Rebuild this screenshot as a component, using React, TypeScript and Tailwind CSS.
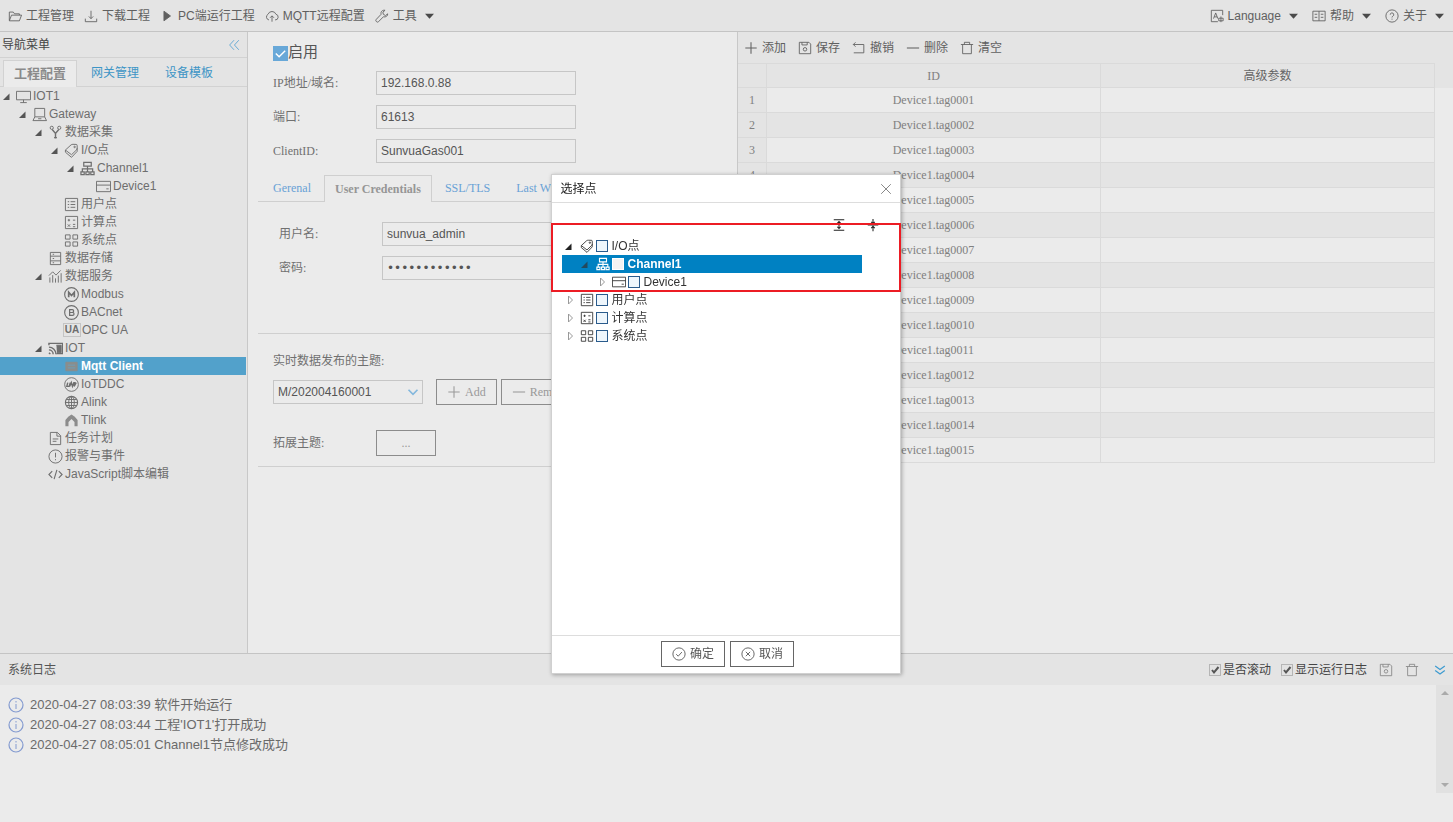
import { useState } from "react";
import type { ReactNode } from "react";

const SANS = "font-['Liberation_Sans','Noto_Sans_CJK_SC',sans-serif]";
const SERIF = "font-['Liberation_Serif','Noto_Sans_CJK_SC',serif]";

const indent = ["pl-0", "pl-4", "pl-8", "pl-12", "pl-16", "pl-20"];

const icons: Record<string, ReactNode> = {
  folder: <><path d="M1.500 13V3.500h4.500l1.500 2h5.500V7" /><path d="M1.500 13.500 4 7h11.500l-2.500 6.500z" /></>,
  download: <><path d="M1.500 11v3.500h13V11" /><path d="M8 2v9M5.500 8.500 8 11l2.500-2.500" /></>,
  play: <path d="M4.500 2.500v11L12 8z" fill="currentColor" />,
  cloud: <><path d="M4.500 12.500A3.500 3.500 0 0 1 3.500 6 4.800 4.800 0 0 1 12.500 6a3.300 3.300 0 0 1-1 6.500" /><path d="M8 14.500V8M5.800 10 8 7.800l2.200 2.200" /></>,
  wrench: <path d="M14.500 5.500 12 7.500 9.500 6 9 3.500l2.500-2C8.500.8 6.200 3 7 6L1.500 11.800a1.700 1.700 0 0 0 2.700 2.500L9.500 9c3 .6 5.300-1.200 5-3.500z" />,
  lang: <><path d="M14.500 7V1.500h-13v13H9" /><path d="M4 11 6.500 4.500 9 11M5 9h3M10 10.500h5v3h-5zM12.500 8.500v6.500" /></>,
  book: <><path d="M8 2.500v11M8 2.500H1v11h7M8 2.500h7v11H8" /><path d="M3 6h3M3 9.500h3M10 6h3M10 9.500h3" /></>,
  help: <><circle cx="8" cy="8" r="7" /><path d="M6 6.500a2 2 0 1 1 3 1.700c-.7.400-1 .7-1 1.500M8 11v1.200" /></>,
  monitor: <path d="M.5 2.500h15v9H.5zM8 11.500v3M4.500 14.500h7" />,
  laptop: <path d="M3 1.500h10.500v9H3zM3 10.500l-2 4h14.500l-2-4M6.500 12.500h3.500" />,
  fork: <><circle cx="4" cy="3" r="1.700" /><circle cx="12" cy="3" r="1.700" /><path d="M4.500 4.800 8 9l3.500-4.200M8 9v5.500M6.500 13.500h3" strokeWidth="1.500" /></>,
  tag: <><path d="M1.500 7.500 7.500 2q.8-.6 2-.6l3.500.1q1 0 1 1l.1 3q0 1-.7 1.800L8 12.500z" /><path d="M1.500 7.500v2.300L8 15.300l6-6.300V5.500" /><circle cx="11.300" cy="4.200" r=".8" /></>,
  channel: <path d="M4 1.500h8v4H4zM8 5.500v3M2.500 11V8.500h11V11M8 8.500V11M1 11.500h3.500v3H1zM6.300 11.500h3.500v3H6.300zM11.500 11.500H15v3h-3.500z" strokeWidth="1.300" />,
  device: <path d="M.5 2.500h15v11H.5zM.5 6.500h15M11 10.500h2.500" />,
  user: <><path d="M1.500 1.500h13v13h-13z" /><path d="M4 5h1.500M7 5h5M4 8h1.500M7 8h5M4 11h1.500M7 11h5" /></>,
  calc: <><path d="M1.500 1.500h13v13h-13z" /><path d="M4 5.500h2.500M5.200 4.200v2.600M9.500 5.500H12M4 10l2.500 2.500M6.500 10 4 12.500M9.500 10H12M9.500 12.500H12" /></>,
  grid: <path d="M1.500 2h5v4.500h-5zM9.500 2h5v4.500h-5zM1.500 9.500h5V14h-5zM9.500 9.500h5V14h-5z" />,
  store: <path d="M2.500 1.500h11v13h-11zM2.500 5.500h11M2.500 10.500h11M5 3.500h1.500M5 8h1.500M5 12.500h1.500" />,
  chart: <path d="M2 14.500V9M5 14.500V6.500M8 14.500V10M11 14.500V7M14 14.500V4.500M1 7l4-4 3.500 3.500 5-5" />,
  modbus: <><circle cx="8" cy="8" r="7.300" strokeWidth="1.200" /><path d="M5 11V5.500l3 3.500 3-3.500V11" strokeWidth="1.800" /></>,
  bacnet: <><circle cx="8" cy="8" r="7.300" strokeWidth="1.200" /><path d="M6 5h2.800a1.400 1.400 0 0 1 0 3H6zM6 8h3.200a1.500 1.500 0 0 1 0 3H6z" strokeWidth="1.300" /></>,
  cast: <><path d="M1 4.500v-2h14.500v11H9" strokeWidth="1.500" /><path d="M9 4.500h5v8H9.500" fill="currentColor" /><path d="M1 12.500 2.500 14M1 9.500A4.500 4.500 0 0 1 5.500 14M1 6.500A7.500 7.500 0 0 1 8.500 14" strokeWidth="1.500" /></>,
  mqtt: <g fill="#8b8d8c" stroke="#8b8d8c"><path d="M2 3.500h12v9H2z" /><path d="M4 6.500h8M4 9.500h8" stroke="#6f9fb9" /></g>,
  ddc: <><circle cx="8" cy="8" r="7.300" /><path d="M4 6 3 10h2.500l1.200-4M6 10l1.800-4L9 10l1.500-4h1L10.800 10l2.200-4" strokeWidth="1.500" /></>,
  globe: <><circle cx="8" cy="8" r="6.500" strokeWidth="1.200" /><ellipse cx="8" cy="8" rx="3" ry="6.500" /><path d="M1.500 8h13M2.500 4.800h11M2.500 11.200h11M8 1.500v13" /></>,
  tlink: <path d="M1.500 14V7.500L4.500 4 8 1.500 11.500 4l3 3.500V14h-3.300V9.500L8 6.500 4.800 9.500V14z" fill="#8c8c8c" stroke="none" />,
  doc: <path d="M2.500 1.500h7.500l3.500 3.500v9.500h-11zM9.500 1.500V5.500h4M5 8.500h6M5 11h4" />,
  alert: <><circle cx="8" cy="8" r="7" /><path d="M8 4v5M8 10.800V12" /></>,
  code: <path d="M4.500 4.500 1 8l3.500 3.500M11.500 4.500 15 8l-3.500 3.500M9.500 3l-3 10" strokeWidth="1.200" />,
  plus: <path d="M8 1.500v13M1.500 8h13" strokeWidth="1.200" />,
  minus: <path d="M1 8h14" strokeWidth="1.200" />,
  save: <><path d="M1.500 1.500h11l2 2v11h-13zM4.500 1.500v3h6v-3" /><circle cx="8" cy="9.500" r="2" /></>,
  undo: <path d="M4 1.500 1.500 4 4 6.500M1.500 4h12v9.500H2" />,
  trash: <path d="M1 4h14M5 4V1.500h6V4M3 4v10.500h10V4" />,
  ok: <><circle cx="8" cy="8" r="7" /><path d="m4.800 8.200 2.300 2.300 4.200-4.700" /></>,
  cancel: <><circle cx="8" cy="8" r="7" /><path d="m5.500 5.500 5 5M10.500 5.500l-5 5" /></>,
  info: <><circle cx="8" cy="8" r="7" strokeWidth="1.200" /><path d="M8 4v1.500M8 7v5" /></>,
  close: <path d="m2.500 2.500 11 11M13.500 2.500l-11 11" />,
  left: <path d="M8 2.500 3 8l5 5.500M13.500 2.500l-5 5.500 5 5.500" />,
  down: <path d="m2.500 3.500 5.500 4 5.500-4M2.500 8.500l5.500 4 5.500-4" strokeWidth="1.400" />,
  chevron: <path d="m2 5 6 6 6-6" strokeWidth="2.200" />,
  expand: <path d="M2 2h12M2 14h12M8 4.500v7M6 6l2-2 2 2M6 10l2 2 2-2" strokeWidth="1.200" />,
  collapse: <path d="M2 8h12M8 1v5M8 10v5M6 4.500l2 2 2-2M6 11.500l2-2 2 2" strokeWidth="1.200" />,
};

function Icon({ name, className = "size-3.5" }: { name: string; className?: string }) {
  if (name === "opcua") {
    return <span className="w-4 shrink-0 text-center text-[10px] leading-3 font-bold outline outline-[#c4c4c4]">UA</span>;
  }
  return (
    <svg viewBox="0 0 16 16" className={`shrink-0 ${className}`} fill="none" stroke="currentColor" strokeWidth="1" aria-hidden="true">
      {icons[name]}
    </svg>
  );
}

function Caret() {
  return <svg viewBox="0 0 10 6" className="ml-1 h-1.5 w-[9px] shrink-0" fill="#4a4a4a" aria-hidden="true"><path d="M0 .5h10L5 6z" /></svg>;
}

function Arrow({ state, color = "#555" }: { state?: "open" | "closed"; color?: string }) {
  return (
    <svg viewBox="0 0 16 16" className="size-4 shrink-0" aria-hidden="true">
      {state === "open" && <path d="M3 12h6.500V5.500z" fill={color} />}
      {state === "closed" && <path d="M6.500 4v8l4-4z" fill="none" stroke="#999" />}
    </svg>
  );
}

function BarButton({ icon, label, menu }: { icon: string; label: string; menu?: boolean }) {
  return (
    <button type="button" className="flex items-center gap-1 whitespace-nowrap text-[#606060]">
      <Icon name={icon} />
      {label}
      {menu && <Caret />}
    </button>
  );
}

type Node = { level: number; icon: string; label: string; state?: "open" | "closed"; selected?: boolean };

const navTree: Node[] = [
  { level: 0, icon: "monitor", label: "IOT1", state: "open" },
  { level: 1, icon: "laptop", label: "Gateway", state: "open" },
  { level: 2, icon: "fork", label: "数据采集", state: "open" },
  { level: 3, icon: "tag", label: "I/O点", state: "open" },
  { level: 4, icon: "channel", label: "Channel1", state: "open" },
  { level: 5, icon: "device", label: "Device1" },
  { level: 3, icon: "user", label: "用户点" },
  { level: 3, icon: "calc", label: "计算点" },
  { level: 3, icon: "grid", label: "系统点" },
  { level: 2, icon: "store", label: "数据存储" },
  { level: 2, icon: "chart", label: "数据服务", state: "open" },
  { level: 3, icon: "modbus", label: "Modbus" },
  { level: 3, icon: "bacnet", label: "BACnet" },
  { level: 3, icon: "opcua", label: "OPC UA" },
  { level: 2, icon: "cast", label: "IOT", state: "open" },
  { level: 3, icon: "mqtt", label: "Mqtt Client", selected: true },
  { level: 3, icon: "ddc", label: "IoTDDC" },
  { level: 3, icon: "globe", label: "Alink" },
  { level: 3, icon: "tlink", label: "Tlink" },
  { level: 2, icon: "doc", label: "任务计划" },
  { level: 2, icon: "alert", label: "报警与事件" },
  { level: 2, icon: "code", label: "JavaScript脚本编辑" },
];

const pointTree: Node[] = [
  { level: 0, icon: "tag", label: "I/O点", state: "open" },
  { level: 1, icon: "channel", label: "Channel1", state: "open", selected: true },
  { level: 2, icon: "device", label: "Device1", state: "closed" },
  { level: 0, icon: "user", label: "用户点", state: "closed" },
  { level: 0, icon: "calc", label: "计算点", state: "closed" },
  { level: 0, icon: "grid", label: "系统点", state: "closed" },
];

const tags = Array.from({ length: 15 }, (_, i) => `Device1.tag${String(i + 1).padStart(4, "0")}`);

const logs = [
  "2020-04-27 08:03:39 软件开始运行",
  "2020-04-27 08:03:44 工程'IOT1'打开成功",
  "2020-04-27 08:05:01 Channel1节点修改成功",
];

function Sidebar() {
  return (
    <aside className="w-[248px] shrink-0 border-r border-[#c8c8c8] bg-[#e4e4e4]">
      <div className="flex h-[26px] items-center justify-between border-b border-[#d2d2d2] pr-1.5 pl-0.5">
        <span className="text-[#444]">导航菜单</span>
        <button type="button" aria-label="收起" className="text-[#5aa5d2]"><Icon name="left" /></button>
      </div>
      <nav className="flex h-[29px] items-end border-b border-[#d2d2d2] pl-[3px] text-[13px]">
        <button type="button" className="-mb-px h-[27px] border border-b-0 border-[#d2d2d2] bg-[#ebebeb] px-2.5 font-bold text-[#8a8a8a]">工程配置</button>
        <button type="button" className="h-[27px] px-3.5 text-xs text-[#3d95c6]">网关管理</button>
        <button type="button" className="h-[27px] px-3 text-xs text-[#3d95c6]">设备模板</button>
      </nav>
      <ul className="mr-px">
        {navTree.map((n) => (
          <li
            key={n.label}
            className={`flex h-[18px] items-center whitespace-nowrap ${indent[n.level]} ${n.selected ? "bg-[#52a1cb] font-bold text-white" : "text-[#6e6e6e]"}`}
          >
            <Arrow state={n.state} />
            <Icon name={n.icon} className="size-[15px]" />
            <span className="ml-0.5">{n.label}</span>
          </li>
        ))}
      </ul>
    </aside>
  );
}

function Field({ id, label, value, type = "text" }: { id: string; label: string; value: string; type?: string }) {
  const font = type === "password" ? "font-['DejaVu_Sans',sans-serif]" : SANS;
  return (
    <div className="flex items-center">
      <label htmlFor={id} className="w-[103px] shrink-0">{label}</label>
      <input
        id={id}
        type={type}
        defaultValue={value}
        className={`h-6 w-[200px] border border-[#c6c6c6] bg-transparent px-1 text-[#555] outline-none ${font}`}
      />
    </div>
  );
}

function MqttForm() {
  return (
    <section className={`w-[490px] shrink-0 border-r border-[#c8c8c8] pt-[11px] pl-2.5 text-[#707070] ${SERIF}`}>
      <div className="space-y-2.5 pl-[15px]">
        <label className="mb-2 flex h-5 items-center text-[15px] text-[#555]">
          <span className="relative flex">
            <input type="checkbox" defaultChecked className="size-[15px] appearance-none bg-[#68a8d8]" />
            <svg viewBox="0 0 16 16" className="pointer-events-none absolute inset-0" fill="none" stroke="#fff" strokeWidth="1.500" aria-hidden="true"><path d="m3 8 3.500 3.500L13 5" /></svg>
          </span>
          启用
        </label>
        <Field id="host" label="IP地址/域名:" value="192.168.0.88" />
        <Field id="port" label="端口:" value="61613" />
        <Field id="client" label="ClientID:" value="SunvuaGas001" />
      </div>

      <nav className="mt-3 flex h-[27px] border-b border-[#cfcfcf] pl-0.5 text-[#69a2d6]">
        <button type="button" className="px-[13px]">Gerenal</button>
        <button type="button" className="-mb-px border border-b-0 border-[#cfcfcf] bg-[#ebebeb] px-2.5 font-bold text-[#969696]">User Credentials</button>
        <button type="button" className="px-[13px]">SSL/TLS</button>
        <button type="button" className="px-[13px]">Last W</button>
      </nav>
      <div className="h-[132px] space-y-2.5 border-b border-[#cfcfcf] pt-5 pl-[21px]">
        <Field id="user" label="用户名:" value="sunvua_admin" />
        <Field id="pass" label="密码:" value="############" type="password" />
      </div>

      <div className="border-b border-[#cfcfcf] pt-[18px] pb-2.5 pl-[15px]">
        <label htmlFor="topic" className="block h-[27px] leading-[18px]">实时数据发布的主题:</label>
        <div className="flex items-center gap-1">
          <div className="relative mr-[9px]">
            <select id="topic" className={`h-6 w-[150px] appearance-none border border-[#c6c6c6] bg-transparent px-1 text-[#555] ${SANS}`}>
              <option>M/202004160001</option>
            </select>
            <Icon name="chevron" className="pointer-events-none absolute top-1.5 right-1 size-3 text-[#84b8dd]" />
          </div>
          <button type="button" className="flex h-[26px] items-center gap-1 border border-[#8c8c8c] px-2.5 text-[#999]"><Icon name="plus" />Add</button>
          <button type="button" className="flex h-[26px] items-center gap-1 border border-[#8c8c8c] px-2.5 text-[#999]"><Icon name="minus" />Remove</button>
        </div>
        <div className="mt-[25px] flex items-center">
          <span className="w-[103px]">拓展主题:</span>
          <button type="button" className="h-[26px] w-[60px] border border-[#8c8c8c] text-[#999]">...</button>
        </div>
      </div>
    </section>
  );
}

function TagGrid() {
  return (
    <section className="min-w-0 flex-1">
      <div className="flex h-[31px] items-center gap-3 bg-[#e4e4e4] pl-1.5">
        <BarButton icon="plus" label="添加" />
        <BarButton icon="save" label="保存" />
        <BarButton icon="undo" label="撤销" />
        <BarButton icon="minus" label="删除" />
        <BarButton icon="trash" label="清空" />
      </div>
      <div className="bg-[linear-gradient(#e4e4e4_25px,transparent_25px)]">
        <div className="pr-[18px]">
          <table className={`w-full table-fixed border-separate border-spacing-0 text-center text-[#808080] ${SERIF}`}>
            <thead>
              <tr className="h-[25px] [&>th]:border-y [&>th]:border-r [&>th]:border-[#dadada] [&>th]:p-0 [&>th]:font-normal">
                <th className="w-[29px]" />
                <th>ID</th>
                <th className="text-[#666]">高级参数</th>
              </tr>
            </thead>
            <tbody>
              {tags.map((t, i) => (
                <tr key={t} className="h-[25px] even:bg-[#e4e4e4] [&>td]:border-r [&>td]:border-b [&>td]:border-[#dadada] [&>td]:p-0">
                  <td className="bg-[#e4e4e4]">{i + 1}</td>
                  <td>{t}</td>
                  <td />
                </tr>
              ))}
            </tbody>
          </table>
        </div>
      </div>
    </section>
  );
}

function LogCheck({ label }: { label: string }) {
  return (
    <label className="flex items-center gap-0.5 text-[#444]">
      <span className="relative flex">
        <input type="checkbox" defaultChecked className="size-3 appearance-none border border-[#b5b5b5] bg-[#e2e2e2]" />
        <svg viewBox="0 0 12 12" className="pointer-events-none absolute inset-0" fill="none" stroke="#555" strokeWidth="2" aria-hidden="true"><path d="m3 6 2 2.500L9.500 3" /></svg>
      </span>
      {label}
    </label>
  );
}

function LogPanel() {
  return (
    <section className="h-[169px] shrink-0 border-t border-[#c4c4c4]">
      <header className="flex h-[31px] items-center bg-[#e4e4e4] pr-1.5 pl-2 text-[#555]">
        <h2 className="mr-auto">系统日志</h2>
        <div className="flex items-center gap-2.5">
          <LogCheck label="是否滚动" />
          <LogCheck label="显示运行日志" />
        </div>
        <div className="ml-3 flex items-center gap-3 text-[#888]">
          <button type="button" aria-label="保存日志"><Icon name="save" /></button>
          <button type="button" aria-label="清空日志"><Icon name="trash" /></button>
          <button type="button" aria-label="收起日志" className="ml-0.5 text-[#3d9bd0]"><Icon name="down" /></button>
        </div>
      </header>
      <div className="flex h-[108px]">
        <ul className="flex-1 pt-2.5 pl-2 text-[13px] text-[#6a6a6a]">
          {logs.map((l) => (
            <li key={l} className="flex h-5 items-center gap-1.5">
              <Icon name="info" className="size-4 text-[#849bd0]" />
              {l}
            </li>
          ))}
        </ul>
        <div className="flex w-[17px] flex-col items-center justify-between bg-[#e1e1e1] py-1.5">
          <svg viewBox="0 0 8 4" className="h-1 w-2" fill="#aaa" aria-hidden="true"><path d="M0 4h8L4 0z" /></svg>
          <svg viewBox="0 0 8 4" className="h-1 w-2" fill="#aaa" aria-hidden="true"><path d="M0 0h8L4 4z" /></svg>
        </div>
      </div>
    </section>
  );
}

function PointDialog({ onClose }: { onClose: () => void }) {
  return (
    <div className="fixed inset-0 flex items-center justify-center pt-[26px] pr-0.5">
      <div role="dialog" aria-labelledby="dlg-title" className="relative flex h-[500px] w-[350px] flex-col border border-[#d0d0d0] bg-white shadow-[1px_1px_4px_rgba(0,0,0,0.300)]">
        <header className="flex h-7 items-center justify-between border-b border-[#ddd] pr-[7px] pl-[9px]">
          <h2 id="dlg-title" className="text-[#222]">选择点</h2>
          <button type="button" aria-label="关闭" onClick={onClose} className="text-[#777]"><Icon name="close" /></button>
        </header>
        <div className="flex-1 pl-2.5">
          <div className="flex h-[34px] items-end justify-end gap-5 pr-5 pb-[5px] text-[#222]">
            <button type="button" aria-label="展开"><Icon name="expand" /></button>
            <button type="button" aria-label="折叠"><Icon name="collapse" /></button>
          </div>
          <ul className="w-[300px]">
            {pointTree.map((n) => (
              <li key={n.label} className={`h-[18px] ${n.selected ? "bg-[#0081c2] font-bold text-white" : "text-[#333]"}`}>
                <label className={`flex h-full items-center ${indent[n.level]}`}>
                  <Arrow state={n.state} color={n.selected ? "#234a5e" : "#222"} />
                  <span className="flex w-[18px] pl-0.5"><Icon name={n.icon} /></span>
                  <input type="checkbox" className={`mr-1 size-3 appearance-none border ${n.selected ? "border-white bg-[#f3f3f3]" : "border-[#2a5b8c] bg-[#eef6fc] checked:bg-[#2a5b8c]"}`} />
                  {n.label}
                </label>
              </li>
            ))}
          </ul>
        </div>
        <footer className="flex h-[38px] items-start justify-center gap-[5px] border-t border-[#ddd] pt-[5px] pl-1 text-[#555]">
          <button type="button" onClick={onClose} className="flex h-[26px] w-16 items-center justify-center gap-1 border border-[#666]"><Icon name="ok" />确定</button>
          <button type="button" onClick={onClose} className="flex h-[26px] w-16 items-center justify-center gap-1 border border-[#666]"><Icon name="cancel" />取消</button>
        </footer>
        <div className="pointer-events-none absolute -inset-x-px top-12 h-[69px] border-2 border-[#ec1c24]" />
      </div>
    </div>
  );
}

export default function App() {
  const [picking, setPicking] = useState(true);

  return (
    <div className={`flex h-screen flex-col overflow-hidden bg-[#ebebeb] text-xs ${SANS}`}>
      {/* Menu bar */}
      <header className="flex h-8 shrink-0 items-center justify-between border-b border-[#c4c4c4] bg-[#e4e4e4] pr-[9px] pl-2">
        <div className="flex items-center gap-2.5">
          <BarButton icon="folder" label="工程管理" />
          <BarButton icon="download" label="下载工程" />
          <BarButton icon="play" label="PC端运行工程" />
          <BarButton icon="cloud" label="MQTT远程配置" />
          <BarButton icon="wrench" label="工具" menu />
        </div>
        <div className="flex items-center gap-3.5">
          <BarButton icon="lang" label="Language" menu />
          <BarButton icon="book" label="帮助" menu />
          <BarButton icon="help" label="关于" menu />
        </div>
      </header>

      <main className="flex min-h-0 flex-1">
        <Sidebar />
        <MqttForm />
        <TagGrid />
      </main>

      <LogPanel />
      {picking && <PointDialog onClose={() => setPicking(false)} />}
    </div>
  );
}
